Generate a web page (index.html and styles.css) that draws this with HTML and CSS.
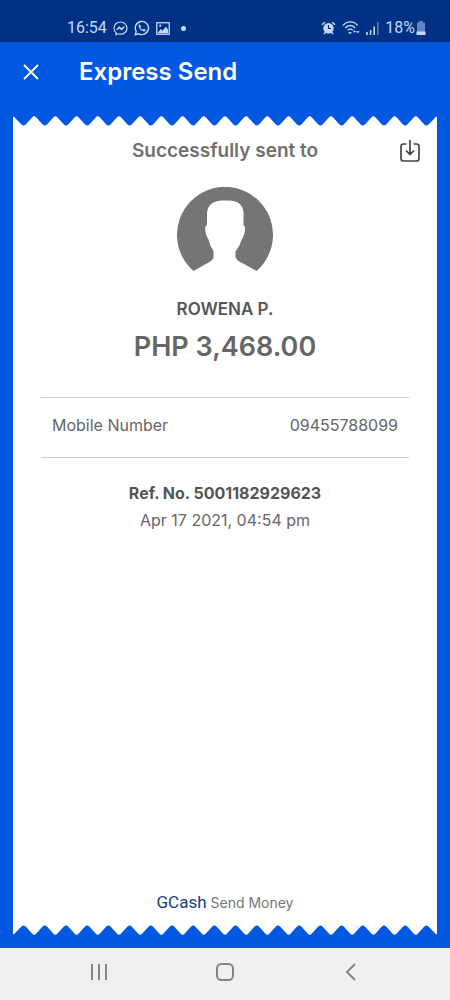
FILE: index.html
```html
<!DOCTYPE html>
<html lang="en">
<head>
<meta charset="utf-8">
<meta name="viewport" content="width=device-width, initial-scale=1">
<title>Express Send</title>
<link rel="stylesheet" href="styles.css">
</head>
<body>
<div class="status">
  <div class="status-group">
    <span class="clock">16:54</span>
    <svg width="15" height="15" viewBox="0 0 15 15" fill="none" stroke="currentColor" stroke-width="1.200"><path d="M7.500 1C3.800 1 1 3.700 1 7.200c0 1.900.8 3.500 2.100 4.600v2l1.900-1c.8.3 1.600.4 2.500.4 3.700 0 6.500-2.600 6.500-6S11.200 1 7.500 1Z"/><path d="M3.500 8.800 6.300 6l2.200 2L11.500 5.600 8.700 8.700 6.500 6.800Z"/></svg>
    <svg width="16" height="16" viewBox="0 0 16 16"><path d="M1.300 14.700l.9-3.400A6.600 6.600 0 1 1 4.800 13.800Z" fill="none" stroke="currentColor" stroke-width="1.400"/><path d="M5.600 4.200c-1 .5-1.200 1.700-.6 3 .9 2 2.300 3.400 4.300 4.100 1.300.4 2.300-.2 2.400-1.500L9.800 8.800l-.9 1c-1.200-.5-2-1.300-2.500-2.400l.7-.9Z" fill="currentColor"/></svg>
    <svg width="14" height="13" viewBox="0 0 15 14"><rect x=".8" y=".8" width="13.400" height="12.400" fill="none" stroke="currentColor" stroke-width="1.400"/><path d="M2 11.500 5 7.500l2 2L10.500 5 13 8v4H2Z" fill="currentColor"/><circle cx="4.500" cy="4" r="1.200" fill="currentColor"/></svg>
    <span class="dot"></span>
  </div>
  <div class="status-group status-right">
    <svg width="15" height="14" viewBox="0 0 15 14"><circle cx="7.500" cy="7.200" r="5.200" fill="currentColor"/><path d="M1 3.700 3.800 1.200M11.200 1.200l2.800 2.500M2.800 13l2-2M12.200 13l-2-2" stroke="currentColor" stroke-width="1.500"/><path d="M7.500 4v3.500h2.500" fill="none" stroke="#003184" stroke-width="1.200"/></svg>
    <svg width="18" height="14" viewBox="0 0 18 14" fill="none" stroke="currentColor" stroke-width="1.400"><path d="M1 4.500C5-.3 12-.3 15.500 4.500M3.300 7c2.800-3.300 7.200-3.300 9.800 0M5.700 9.300c1.400-1.600 3.600-1.600 5 0"/><path d="M6.500 11.500h3L8 13ZM11.200 11l1.200-1.400L13.600 11ZM14.500 10.500h2.600L15.800 12Z" fill="currentColor" stroke-width=".6"/></svg>
    <svg width="13" height="13" viewBox="0 0 13 13" stroke="currentColor" stroke-width="1.600"><path d="M1 10v3M4.600 8v5M8.200 4.500V13"/><path d="M11.800 0v13" opacity=".45"/></svg>
    <span class="battery">18%<svg width="10" height="14" viewBox="0 0 10 14" fill="currentColor"><path d="M3 0h4v1.500h2V11H1V1.500h2Z" opacity=".5"/><path d="M.5 10.500h9V14h-9Z"/></svg></span>
  </div>
</div>
<header class="bar">
  <button class="icon-button" type="button" aria-label="Close"><svg width="16" height="16" viewBox="0 0 16 16" stroke="currentColor" stroke-width="1.800"><path d="M1 1l14 14M15 1 1 15"/></svg></button>
  <h1 class="title">Express Send</h1>
</header>
<main class="receipt">
  <svg class="edge" viewBox="0 0 400 10" preserveAspectRatio="none" aria-hidden="true"><path id="teeth" d="M0 10V1Q1 0 2 2L8 8.500Q10 10.500 12 8.500L18 1.500Q20-1 22 1.500L28 8.500Q30 10.500 32 8.500L38 1.500Q40-1 42 1.500L48 8.500Q50 10.500 52 8.500L58 1.500Q60-1 62 1.500L68 8.500Q70 10.500 72 8.500L78 1.500Q80-1 82 1.500L88 8.500Q90 10.500 92 8.500L98 1.500Q100-1 102 1.500L108 8.500Q110 10.500 112 8.500L118 1.500Q120-1 122 1.500L128 8.500Q130 10.500 132 8.500L138 1.500Q140-1 142 1.500L148 8.500Q150 10.500 152 8.500L158 1.500Q160-1 162 1.500L168 8.500Q170 10.500 172 8.500L178 1.500Q180-1 182 1.500L188 8.500Q190 10.500 192 8.500L198 1.500Q200-1 202 1.500L208 8.500Q210 10.500 212 8.500L218 1.500Q220-1 222 1.500L228 8.500Q230 10.500 232 8.500L238 1.500Q240-1 242 1.500L248 8.500Q250 10.500 252 8.500L258 1.500Q260-1 262 1.500L268 8.500Q270 10.500 272 8.500L278 1.500Q280-1 282 1.500L288 8.500Q290 10.500 292 8.500L298 1.500Q300-1 302 1.500L308 8.500Q310 10.500 312 8.500L318 1.500Q320-1 322 1.500L328 8.500Q330 10.500 332 8.500L338 1.500Q340-1 342 1.500L348 8.500Q350 10.500 352 8.500L358 1.500Q360-1 362 1.500L368 8.500Q370 10.500 372 8.500L378 1.500Q380-1 382 1.500L388 8.500Q390 10.500 392 8.500L398 2Q399 0 400 1V10Z" fill="#fff"/></svg>
  <section class="paper">
    <div class="sent-row">
      <h2 class="sent">Successfully sent to</h2>
      <button class="icon-button save" type="button" aria-label="Save receipt"><svg width="22" height="24" viewBox="0 0 22 24" fill="none" stroke="currentColor" stroke-width="1.700"><path d="M7.500 5H4.500Q2 5 2 7.500V19.500Q2 22 4.500 22H17.500Q20 22 20 19.500V7.500Q20 5 17.500 5H14.500M11 1v14M7 11.500l4 4 4-4"/></svg></button>
    </div>
    <svg class="avatar" width="96" height="85" viewBox="0 0 96 85" fill="#757575"><path d="M16.500 84A48 48 0 1 1 79.500 84L68 77.500Q59 73.500 58.500 70V64.500Q62.500 60 64.500 53C67 49 69 43 67.500 39L66.500 38V25Q65.500 14 52 13.500H44Q31 14.500 30 26V38L28.500 39.500C27.500 43 29 49 31.500 52.500Q33 59.500 36.500 64V70.500Q36 73.500 28 77.500Z"/></svg>
    <p class="name">ROWENA P.</p>
    <p class="amount">PHP 3,468.00</p>
    <dl class="detail"><dt>Mobile Number</dt><dd>09455788099</dd></dl>
    <p class="ref">Ref. No. 5001182929623</p>
    <p class="date">Apr 17 2021, 04:54 pm</p>
    <p class="brand"><span class="brand-name">GCash</span> Send Money</p>
  </section>
  <svg class="edge edge-bottom" viewBox="0 0 400 10" preserveAspectRatio="none" aria-hidden="true"><use href="#teeth"/></svg>
</main>
<nav class="nav" aria-label="System">
  <button class="icon-button" type="button" aria-label="Recent apps"><svg width="18" height="18" viewBox="0 0 18 18" stroke="currentColor" stroke-width="2"><path d="M2 1v16M9 1v16M16 1v16"/></svg></button>
  <button class="icon-button" type="button" aria-label="Home"><svg width="18" height="18" viewBox="0 0 18 18" fill="none" stroke="currentColor" stroke-width="2"><rect x="1" y="1" width="16" height="16" rx="4.500"/></svg></button>
  <button class="icon-button" type="button" aria-label="Back"><svg width="18" height="18" viewBox="0 0 18 18" fill="none" stroke="currentColor" stroke-width="2"><path d="M13 1 5 9l8 8"/></svg></button>
</nav>
</body>
</html>
```
FILE: styles.css
```css
* { box-sizing: border-box; }

body {
  margin: 0;
  min-height: 100vh;
  display: flex;
  flex-direction: column;
  background: #0258e0;
  color: #666;
  font-family: Inter, "Noto Sans", sans-serif;
}

h1, h2, p, dl, dd { margin: 0; }

svg { display: block; flex: none; }

.icon-button {
  display: flex;
  padding: 0;
  border: 0;
  background: none;
  color: inherit;
}

.status {
  display: flex;
  justify-content: space-between;
  align-items: flex-end;
  height: 42px;
  padding: 0 24px 4px 67px;
  background: #003184;
  color: #c3d8fb;
  font: 16px/20px Roboto, sans-serif;
}

.status-group {
  display: flex;
  align-items: center;
  gap: 6px;
}

.battery {
  display: flex;
  align-items: center;
  gap: 1px;
}

.dot {
  width: 5px;
  height: 5px;
  margin-left: 5px;
  border-radius: 50%;
  background: currentColor;
}

.bar {
  display: flex;
  align-items: center;
  gap: 40px;
  height: 74px;
  padding: 0 23px 14px;
  color: #fff;
}

.title {
  font-size: 24px;
  line-height: 32px;
  font-weight: 600;
}

.receipt {
  flex: 1;
  display: flex;
  flex-direction: column;
  padding: 0 13px 13px;
}

.edge {
  width: 100%;
  height: 10px;
}

.edge-bottom { transform: rotate(180deg); }

.paper {
  flex: 1;
  display: flex;
  flex-direction: column;
  align-items: center;
  padding: 12px 16px;
  background: #fff;
  text-align: center;
}

.sent-row {
  display: grid;
  grid-template-columns: 1fr auto 1fr;
  align-items: center;
  width: 100%;
}

.sent {
  grid-column: 2;
  font-size: 19px;
  line-height: 26px;
  font-weight: 600;
  color: #707070;
}

.save {
  justify-self: end;
  color: #444;
}

.avatar { margin-top: 23px; }

.name {
  margin-top: 25px;
  font-size: 17px;
  line-height: 24px;
  font-weight: 600;
  color: #555;
}

.amount {
  margin-top: 8px;
  font-size: 27px;
  line-height: 36px;
  font-weight: 600;
}

.detail {
  align-self: stretch;
  display: flex;
  justify-content: space-between;
  margin: 32px 12px 0;
  padding: 15px 11px 20px;
  border: solid #ccc;
  border-width: 1px 0;
  font-size: 16px;
  line-height: 24px;
}

.ref {
  margin-top: 23px;
  font-size: 16px;
  line-height: 24px;
  font-weight: 700;
  color: #555;
}

.date {
  margin-top: 3px;
  font-size: 16px;
  line-height: 24px;
}

.brand {
  margin-top: auto;
  font-size: 14px;
  line-height: 20px;
  color: #777;
}

.brand-name {
  font: 17px/20px Roboto, sans-serif;
  color: #123f85;
}

.nav {
  display: flex;
  justify-content: center;
  align-items: center;
  gap: 108px;
  height: 52px;
  padding-bottom: 4px;
  background: #f0f0f0;
  color: #858585;
}
```
